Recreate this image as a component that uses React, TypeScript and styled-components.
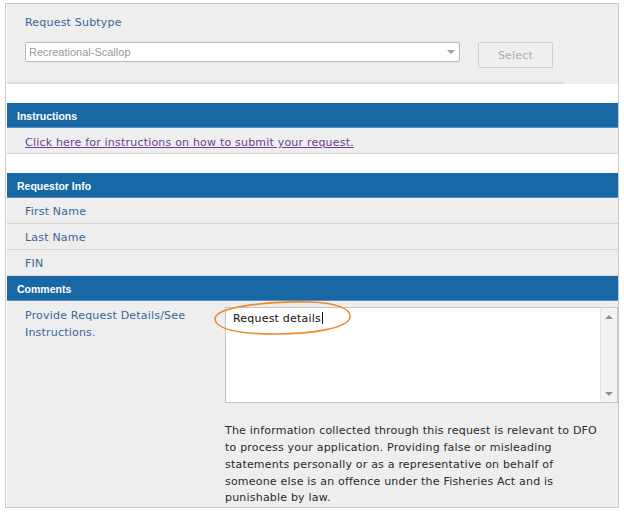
import styled, { createGlobalStyle } from "styled-components";

const GlobalStyle = createGlobalStyle`
  html, body {
    margin: 0;
    padding: 0;
    background: #ffffff;
  }
  body {
    font-family: "DejaVu Sans", Verdana, sans-serif;
    font-size: 11px;
    letter-spacing: 0.2px;
  }
`;

const Frame = styled.div`
  margin: 3px 0 0 5px;
  width: 614px;
  height: 505px;
  box-sizing: border-box;
  border: 1px solid #c9c9c9;
  padding: 0 0 0 1px;
  display: flex;
  flex-direction: column;
  overflow: hidden;
`;

const SubtypePanel = styled.div`
  position: relative;
  height: 82px;
  box-sizing: border-box;
  background: #eeeeee;
  padding: 12px 0 0 18px;
  display: flex;
  flex-direction: column;
  gap: 12px;

  &::after {
    content: "";
    position: absolute;
    left: 0;
    bottom: 0;
    width: 557px;
    height: 2px;
    background: #dadada;
  }
`;

const FieldLabel = styled.div`
  color: #366796;
  line-height: 14px;
`;

const SubtypeRow = styled.div`
  display: flex;
  align-items: flex-start;
  gap: 18px;
`;

const FakeSelect = styled.div`
  width: 435px;
  height: 20px;
  box-sizing: border-box;
  background: #ffffff;
  border: 1px solid #b9b9b9;
  border-radius: 2px;
  display: flex;
  align-items: center;
  justify-content: space-between;
  padding: 0 4px 0 3px;
  font-family: "Liberation Sans", Arial, sans-serif;
  font-size: 11px;
  letter-spacing: 0;
  color: #9a9a9a;
`;

const Caret = styled.span`
  width: 0;
  height: 0;
  border-left: 4px solid transparent;
  border-right: 4px solid transparent;
  border-top: 4px solid #a0a0a0;
`;

const SelectButton = styled.button`
  width: 75px;
  height: 26px;
  box-sizing: border-box;
  background: #efefef;
  border: 1px solid #cfcfcf;
  border-radius: 1px;
  font-family: "DejaVu Sans", Verdana, sans-serif;
  font-size: 11px;
  letter-spacing: 0.2px;
  color: #adadad;
  padding: 0;
`;

const Section = styled.div<{ $gap?: number }>`
  margin-top: ${(p) => p.$gap ?? 0}px;
  display: flex;
  flex-direction: column;
`;

const SectionHeader = styled.div`
  height: 25px;
  box-sizing: border-box;
  background: #1868a5;
  border-bottom: 1px solid #5b8fbd;
  color: #ffffff;
  font-family: "Liberation Sans", Tahoma, sans-serif;
  font-weight: bold;
  font-size: 10.5px;
  letter-spacing: 0;
  padding: 2px 0 0 10px;
  display: flex;
  align-items: center;
`;

const Row = styled.div`
  height: 26px;
  box-sizing: border-box;
  background: #eeeeee;
  border-bottom: 1px solid #d3d3d3;
  padding: 3px 0 0 18px;
  display: flex;
  align-items: center;
`;

const InstructionLink = styled.a`
  color: #6c3f8e;
  text-decoration: underline;
  cursor: pointer;
`;

const CommentsPanel = styled.div`
  position: relative;
  flex: 1;
  background: #eeeeee;
  display: grid;
  grid-template-columns: 218px 1fr;
  align-content: start;
  padding-top: 6px;
`;

const CommentLabel = styled.div`
  padding: 0 0 0 18px;
  color: #366796;
  line-height: 17px;
`;

const TextBox = styled.div`
  height: 96px;
  box-sizing: border-box;
  background: #ffffff;
  border: 1px solid #c6c6c6;
  display: flex;
`;

const TextContent = styled.div`
  flex: 1;
  padding: 3px 0 0 7px;
  color: #111111;
  line-height: 16px;
`;

const TextCursor = styled.span`
  display: inline-block;
  width: 1px;
  height: 12px;
  margin-left: 1px;
  vertical-align: -2px;
  background: #111111;
`;

const ScrollTrack = styled.div`
  width: 16px;
  background: #f3f3f3;
  border-left: 1px solid #e6e6e6;
  display: flex;
  flex-direction: column;
  justify-content: space-between;
  align-items: center;
  padding: 7px 0 6px;
`;

const Arrow = styled.span<{ $dir: "up" | "down" }>`
  width: 0;
  height: 0;
  border-left: 4px solid transparent;
  border-right: 4px solid transparent;
  ${(p) =>
    p.$dir === "up"
      ? "border-bottom: 4px solid #8f8f8f;"
      : "border-top: 4px solid #8f8f8f;"}
`;

const Disclaimer = styled.p`
  grid-column: 2;
  margin: 20px 0 0;
  width: 378px;
  color: #2a2a2a;
  line-height: 16.7px;
`;

const Annotation = styled.svg`
  position: absolute;
  left: 207px;
  top: -1px;
  width: 137px;
  height: 35px;
  overflow: visible;
  pointer-events: none;
`;

const fields = ["First Name", "Last Name", "FIN"];

export default function App() {
  return (
    <>
      <GlobalStyle />
      <Frame>
        <SubtypePanel>
          <FieldLabel>Request Subtype</FieldLabel>
          <SubtypeRow>
            <FakeSelect>
              <span>Recreational-Scallop</span>
              <Caret />
            </FakeSelect>
            <SelectButton>Select</SelectButton>
          </SubtypeRow>
        </SubtypePanel>

        <Section $gap={19}>
          <SectionHeader>Instructions</SectionHeader>
          <Row>
            <InstructionLink>
              Click here for instructions on how to submit your request.
            </InstructionLink>
          </Row>
        </Section>

        <Section $gap={19}>
          <SectionHeader>Requestor Info</SectionHeader>
          {fields.map((f) => (
            <Row key={f}>
              <FieldLabel>{f}</FieldLabel>
            </Row>
          ))}
          <SectionHeader>Comments</SectionHeader>
        </Section>

        <CommentsPanel>
          <CommentLabel>
            Provide Request Details/See
            <br />
            Instructions.
          </CommentLabel>
          <TextBox>
            <TextContent>
              Request details
              <TextCursor />
            </TextContent>
            <ScrollTrack>
              <Arrow $dir="up" />
              <Arrow $dir="down" />
            </ScrollTrack>
          </TextBox>
          <Disclaimer>
            The information collected through this request is relevant to DFO
            to process your application. Providing false or misleading
            statements personally or as a representative on behalf of someone
            else is an offence under the Fisheries Act and is punishable by law.
          </Disclaimer>
          <Annotation viewBox="0 0 137 35">
            <path
              d="M1 19 C 0 7, 55 1, 95 2 C 124 3, 137 9, 136 17 C 135 28, 98 34, 62 34 C 24 34, 2 29, 1 19 Z"
              fill="none"
              stroke="#ef8a2c"
              strokeWidth="1.6"
            />
          </Annotation>
        </CommentsPanel>
      </Frame>
    </>
  );
}
